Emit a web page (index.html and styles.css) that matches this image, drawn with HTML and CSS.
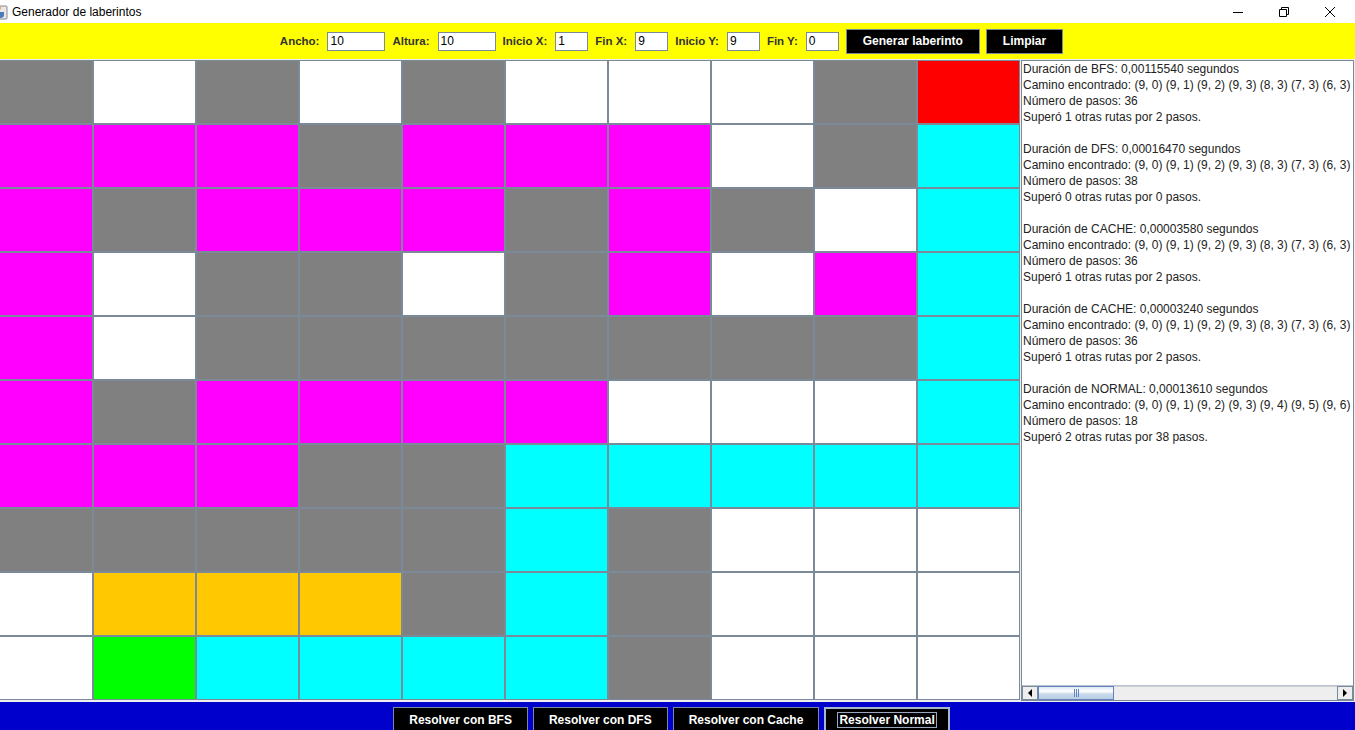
FILE: index.html
```html
<!DOCTYPE html>
<html lang="es">
<head>
<meta charset="utf-8">
<title>Generador de laberintos</title>
<link rel="stylesheet" href="styles.css">
</head>
<body>
<div class="window">
  <header class="titlebar">
    <svg class="app-icon" width="16" height="16" viewBox="0 0 16 16">
      <rect x="1" y="2" width="14" height="13" rx="1" fill="#e8e8e8" stroke="#8a8a8a"/>
      <path d="M4 6 q2 -2 0 -4 M7 6 q2 -2 0 -4" stroke="#e07020" stroke-width="1.2" fill="none"/>
      <path d="M3 8 h9 v3 q0 3 -4.5 3 q-4.5 0 -4.5 -3z" fill="#4a7ab8"/>
    </svg>
    <span class="title">Generador de laberintos</span>
    <div class="controls">
      <div class="ctl"><svg width="10" height="10" viewBox="0 0 10 10"><path d="M0 5.5 H10" stroke="#000" stroke-width="1"/></svg></div>
      <div class="ctl"><svg width="10" height="10" viewBox="0 0 10 10"><path d="M0.5 2.5 H7.5 V9.5 H0.5 Z M2.5 2.5 V0.5 H9.5 V7.5 H7.5" stroke="#000" stroke-width="1" fill="none"/></svg></div>
      <div class="ctl"><svg width="10" height="10" viewBox="0 0 10 10"><path d="M0 0 L10 10 M10 0 L0 10" stroke="#000" stroke-width="1"/></svg></div>
    </div>
  </header>

  <div class="toolbar">
    <label class="lbl">Ancho:</label><div class="fld wide">10</div>
    <label class="lbl">Altura:</label><div class="fld wide">10</div>
    <label class="lbl">Inicio X:</label><div class="fld">1</div>
    <label class="lbl">Fin X:</label><div class="fld">9</div>
    <label class="lbl">Inicio Y:</label><div class="fld">9</div>
    <label class="lbl">Fin Y:</label><div class="fld">0</div>
    <button class="btn tbtn">Generar laberinto</button>
    <button class="btn tbtn">Limpiar</button>
  </div>

  <main class="main">
    <div class="maze">
      <div class="cell g"></div><div class="cell w"></div><div class="cell g"></div><div class="cell w"></div><div class="cell g"></div><div class="cell w"></div><div class="cell w"></div><div class="cell w"></div><div class="cell g"></div><div class="cell r"></div>
      <div class="cell m"></div><div class="cell m"></div><div class="cell m"></div><div class="cell g"></div><div class="cell m"></div><div class="cell m"></div><div class="cell m"></div><div class="cell w"></div><div class="cell g"></div><div class="cell c"></div>
      <div class="cell m"></div><div class="cell g"></div><div class="cell m"></div><div class="cell m"></div><div class="cell m"></div><div class="cell g"></div><div class="cell m"></div><div class="cell g"></div><div class="cell w"></div><div class="cell c"></div>
      <div class="cell m"></div><div class="cell w"></div><div class="cell g"></div><div class="cell g"></div><div class="cell w"></div><div class="cell g"></div><div class="cell m"></div><div class="cell w"></div><div class="cell m"></div><div class="cell c"></div>
      <div class="cell m"></div><div class="cell w"></div><div class="cell g"></div><div class="cell g"></div><div class="cell g"></div><div class="cell g"></div><div class="cell g"></div><div class="cell g"></div><div class="cell g"></div><div class="cell c"></div>
      <div class="cell m"></div><div class="cell g"></div><div class="cell m"></div><div class="cell m"></div><div class="cell m"></div><div class="cell m"></div><div class="cell w"></div><div class="cell w"></div><div class="cell w"></div><div class="cell c"></div>
      <div class="cell m"></div><div class="cell m"></div><div class="cell m"></div><div class="cell g"></div><div class="cell g"></div><div class="cell c"></div><div class="cell c"></div><div class="cell c"></div><div class="cell c"></div><div class="cell c"></div>
      <div class="cell g"></div><div class="cell g"></div><div class="cell g"></div><div class="cell g"></div><div class="cell g"></div><div class="cell c"></div><div class="cell g"></div><div class="cell w"></div><div class="cell w"></div><div class="cell w"></div>
      <div class="cell w"></div><div class="cell o"></div><div class="cell o"></div><div class="cell o"></div><div class="cell g"></div><div class="cell c"></div><div class="cell g"></div><div class="cell w"></div><div class="cell w"></div><div class="cell w"></div>
      <div class="cell w"></div><div class="cell n"></div><div class="cell c"></div><div class="cell c"></div><div class="cell c"></div><div class="cell c"></div><div class="cell g"></div><div class="cell w"></div><div class="cell w"></div><div class="cell w"></div>
    </div>

    <div class="scrollpane">
      <div class="textarea">Duración de BFS: 0,00115540 segundos
Camino encontrado: (9, 0) (9, 1) (9, 2) (9, 3) (8, 3) (7, 3) (6, 3)
Número de pasos: 36
Superó 1 otras rutas por 2 pasos.

Duración de DFS: 0,00016470 segundos
Camino encontrado: (9, 0) (9, 1) (9, 2) (9, 3) (8, 3) (7, 3) (6, 3)
Número de pasos: 38
Superó 0 otras rutas por 0 pasos.

Duración de CACHE: 0,00003580 segundos
Camino encontrado: (9, 0) (9, 1) (9, 2) (9, 3) (8, 3) (7, 3) (6, 3)
Número de pasos: 36
Superó 1 otras rutas por 2 pasos.

Duración de CACHE: 0,00003240 segundos
Camino encontrado: (9, 0) (9, 1) (9, 2) (9, 3) (8, 3) (7, 3) (6, 3)
Número de pasos: 36
Superó 1 otras rutas por 2 pasos.

Duración de NORMAL: 0,00013610 segundos
Camino encontrado: (9, 0) (9, 1) (9, 2) (9, 3) (9, 4) (9, 5) (9, 6)
Número de pasos: 18
Superó 2 otras rutas por 38 pasos.</div>
      <div class="hscroll">
        <div class="arrow left"><span class="tri-left"></span></div>
        <div class="thumb"><span class="grip"></span></div>
        <div class="track"></div>
        <div class="arrow right"><span class="tri-right"></span></div>
      </div>
    </div>
  </main>

  <footer class="actions">
    <button class="btn abtn">Resolver con BFS</button>
    <button class="btn abtn">Resolver con DFS</button>
    <button class="btn abtn">Resolver con Cache</button>
    <button class="btn abtn focused"><span class="focus-ring">Resolver Normal</span></button>
  </footer>
</div>
</body>
</html>
```

FILE: styles.css
```css
* { box-sizing: border-box; }

html, body {
  margin: 0;
  padding: 0;
  width: 1355px;
  height: 730px;
  overflow: hidden;
  background: #ffffff;
  font-family: "Liberation Sans", Arial, sans-serif;
}

.window {
  display: flex;
  flex-direction: column;
  width: 1355px;
  height: 730px;
  overflow: hidden;
}

/* Title bar */
.titlebar {
  height: 23px;
  flex: 0 0 23px;
  display: flex;
  align-items: center;
  background: #ffffff;
}

.app-icon {
  margin-left: -8px;
  flex: 0 0 16px;
}

.title {
  margin-left: 4px;
  font-size: 12px;
  color: #000;
}

.controls {
  margin-left: auto;
  margin-right: 2px;
  display: flex;
  height: 23px;
}

.ctl {
  width: 46px;
  height: 23px;
  display: flex;
  align-items: center;
  justify-content: center;
}

/* Toolbar */
.toolbar {
  height: 36px;
  flex: 0 0 36px;
  background: #ffff00;
  display: flex;
  align-items: center;
  justify-content: center;
  padding-right: 12px;
}

.lbl {
  font-size: 11.5px;
  font-weight: bold;
  color: #333333;
  margin-right: 8px;
}

.fld {
  width: 33px;
  height: 19px;
  background: #ffffff;
  border: 1px solid #7a8a99;
  font-size: 12px;
  line-height: 17px;
  padding-left: 2px;
  color: #000;
  margin-right: 7px;
}

.fld.wide { width: 58px; }

.btn {
  height: 25px;
  background: #000000;
  color: #ffffff;
  border: 1px solid #7a8a99;
  font-family: "Liberation Sans", Arial, sans-serif;
  font-size: 12px;
  font-weight: bold;
  padding: 0 16px;
  margin: 0;
}

.tbtn + .tbtn { margin-left: 6px; }

/* Main area */
.main {
  height: 643px;
  flex: 0 0 643px;
  background: #eeeeee;
  display: flex;
  align-items: flex-start;
}

.maze {
  margin-left: -10px;
  margin-top: 1px;
  display: grid;
  grid-template-columns: repeat(10, 103px);
  grid-template-rows: repeat(10, 64px);
  flex: 0 0 1030px;
}

.cell { border: 1px solid #7a8a99; }
.g { background: #808080; }
.w { background: #ffffff; }
.m { background: #ff00ff; }
.c { background: #00ffff; }
.r { background: #ff0000; }
.o { background: #ffc800; }
.n { background: #00ff00; }

.scrollpane {
  margin-left: 1px;
  margin-right: 1px;
  margin-top: 1px;
  flex: 1 1 0;
  min-width: 0;
  height: 641px;
  border: 1px solid #7a8a99;
  background: #ffffff;
  display: flex;
  flex-direction: column;
}

.textarea {
  flex: 1;
  min-width: 0;
  overflow: hidden;
  white-space: pre;
  font-size: 12px;
  line-height: 16px;
  color: #222222;
  padding-left: 1px;
}

.hscroll {
  height: 15px;
  flex: 0 0 15px;
  display: flex;
  background: #eeeeee;
  border-top: 1px solid #b8c4d0;
}

.arrow {
  flex: 0 0 16px;
  width: 16px;
  height: 14px;
  background: #eeeeee;
  border: 1px solid #7a8a99;
  display: flex;
  align-items: center;
  justify-content: center;
}

.tri-left {
  width: 0; height: 0;
  border-top: 4px solid transparent;
  border-bottom: 4px solid transparent;
  border-right: 4px solid #000;
}

.tri-right {
  width: 0; height: 0;
  border-top: 4px solid transparent;
  border-bottom: 4px solid transparent;
  border-left: 4px solid #000;
}

.thumb {
  flex: 0 0 76px;
  width: 76px;
  height: 14px;
  border: 1px solid #6382bf;
  background: linear-gradient(#dde8f3 0%, #ffffff 35%, #c9d9ea 60%, #b8cfe5 100%);
  display: flex;
  align-items: center;
  justify-content: center;
}

.grip {
  width: 5px;
  height: 8px;
  background: repeating-linear-gradient(90deg, #6382bf 0 1px, transparent 1px 2px);
}

.track {
  flex: 1;
  height: 14px;
  background: #eeeeee;
  border-top: 1px solid #d0d0d0;
}

/* Bottom action bar */
.actions {
  flex: 1;
  background: #0000cc;
  display: flex;
  align-items: flex-start;
  justify-content: center;
  gap: 5px;
  padding-top: 5px;
  padding-right: 12px;
}

.abtn { flex: 0 0 auto; padding: 0 15px; }

.focused {
  border: 2px solid #a3b8cc;
  padding: 0 11px;
}

.focus-ring {
  display: inline-block;
  border: 1px solid #99a8c0;
  padding: 0 1px;
  line-height: 14px;
}
```
